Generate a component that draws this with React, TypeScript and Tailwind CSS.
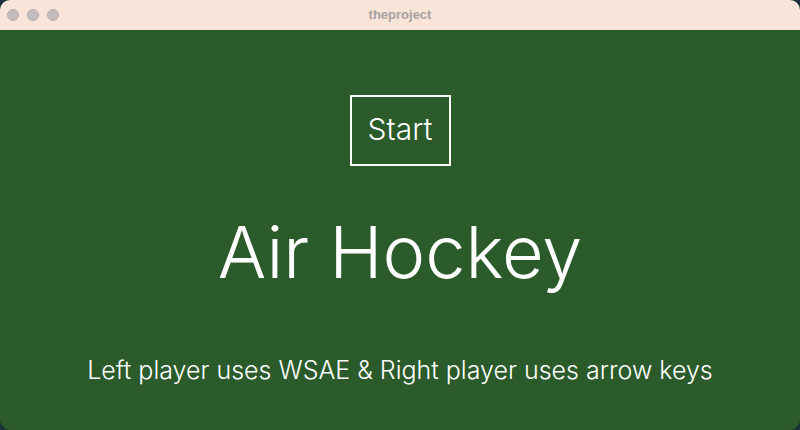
import React from 'react';

export default function App() {
  return (
    <div className="w-[800px] h-[430px] bg-[#1c2f3a] overflow-hidden">
      <div className="w-full h-full rounded-[10px] overflow-hidden flex flex-col bg-[#2b5a2b]">
        {/* title bar */}
        <div className="relative h-[30px] shrink-0 bg-[#f8e4d9] flex items-center">
          <div className="flex gap-2 pl-[7px]">
            <span className="w-3 h-3 rounded-full bg-[#c4bcbc] border border-[#b5aeae]" />
            <span className="w-3 h-3 rounded-full bg-[#c4bcbc] border border-[#b5aeae]" />
            <span className="w-3 h-3 rounded-full bg-[#c4bcbc] border border-[#b5aeae]" />
          </div>
          <span className="absolute inset-0 flex items-center justify-center text-[13px] font-bold text-[#a9a1a1] font-['Liberation_Sans',sans-serif]">
            theproject
          </span>
        </div>

        {/* game screen */}
        <div className="flex-1 flex flex-col items-center text-white font-['Inter',sans-serif] font-light">
          <button className="mt-[65px] w-[101px] h-[71px] border-2 border-white flex items-center justify-center pb-[4px] text-[30px] leading-none">
            Start
          </button>
          <h1 className="mt-[50px] text-[72px] leading-none">Air Hockey</h1>
          <p className="mt-[70px] text-[25px] leading-none">
            Left player uses WSAE &amp; Right player uses arrow keys
          </p>
        </div>
      </div>
    </div>
  );
}
